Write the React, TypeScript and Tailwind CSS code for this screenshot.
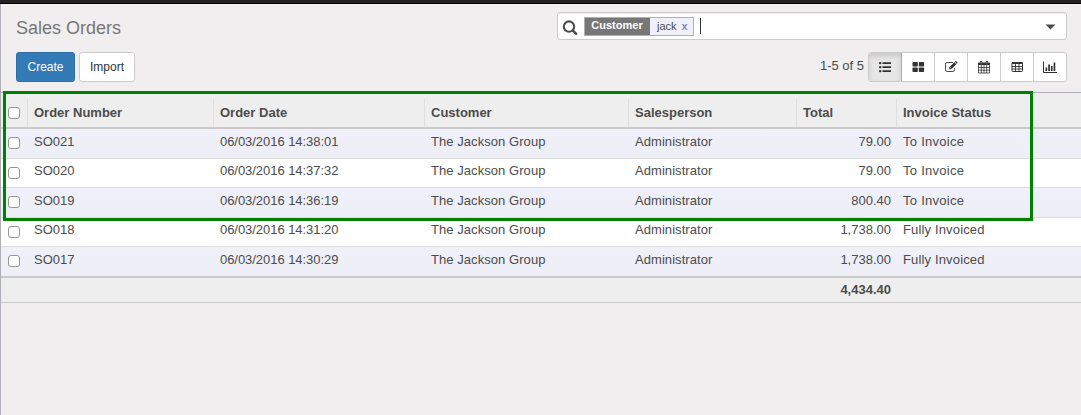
import type { ReactNode } from "react";

const columns = ["Order Number", "Order Date", "Customer", "Salesperson", "Total", "Invoice Status"];

const orders = [
  { id: "SO021", date: "06/03/2016 14:38:01", total: "79.00", status: "To Invoice", size: "h-[30px] leading-[25px]" },
  { id: "SO020", date: "06/03/2016 14:37:32", total: "79.00", status: "To Invoice", size: "h-[29px] leading-[23px]" },
  { id: "SO019", date: "06/03/2016 14:36:19", total: "800.40", status: "To Invoice", size: "h-[30px] leading-[25px]" },
  { id: "SO018", date: "06/03/2016 14:31:20", total: "1,738.00", status: "Fully Invoiced", size: "h-[29px] leading-[23px]" },
  { id: "SO017", date: "06/03/2016 14:30:29", total: "1,738.00", status: "Fully Invoiced", size: "h-[29px] leading-[25px]" },
];

const grid = "grid grid-cols-[26px_186px_211px_204px_168px_100px_1fr]";

function Icon({ children }: { children: ReactNode }) {
  return (
    <svg width="14" height="14" viewBox="0 0 14 14" fill="currentColor">
      {children}
    </svg>
  );
}

const views: { name: string; icon: ReactNode }[] = [
  {
    name: "List",
    icon: (
      <Icon>
        <rect x="1" y="2" width="2.4" height="2.2" rx="1" />
        <rect x="1" y="6" width="2.4" height="2.2" rx="1" />
        <rect x="1" y="10" width="2.4" height="2.2" rx="1" />
        <path d="M4.500 2.300H13v1.600H4.500zM4.500 6.300H13v1.600H4.500zM4.500 10.300H13v1.600H4.500z" />
      </Icon>
    ),
  },
  {
    name: "Kanban",
    icon: (
      <Icon>
        <rect x="1.500" y="2" width="5.3" height="4.500" rx="0.7" />
        <rect x="7.800" y="2" width="5.300" height="4.500" rx="0.7" />
        <rect x="1.500" y="7.500" width="5.300" height="4.500" rx="0.7" />
        <rect x="7.800" y="7.500" width="5.300" height="4.500" rx="0.7" />
      </Icon>
    ),
  },
  {
    name: "Form",
    icon: (
      <Icon>
        <path d="M9 2.500H3.200A1.700 1.700 0 0 0 1.500 4.200V9.800A1.700 1.700 0 0 0 3.200 11.500H8.800A1.700 1.700 0 0 0 10.500 9.800V8.200" fill="none" stroke="currentColor" strokeWidth="0.9" />
        <path d="M5.300 7.200 10.300 2.200 12.300 4.200 7.300 9.200H5.300z" />
        <path d="M10.800 1.700 11.300 1.200a.7.7 0 0 1 1 0l1 1a.7.7 0 0 1 0 1l-.5.5z" />
        <path d="M6 7.100l1.300 1.300" stroke="white" strokeWidth="0.7" />
      </Icon>
    ),
  },
  {
    name: "Calendar",
    icon: (
      <Icon>
        <path d="M1.500 4.500h11v8.500h-11zM1.500 7.500h11M1.500 10.200h11M4.300 4.500v8.500M7 4.500v8.500M9.700 4.500v8.500" fill="none" stroke="currentColor" strokeWidth="0.8" />
        <path d="M1.700 2.500h10.600q.7 0 .7.700V5H1V3.200q0-.7.700-.7z" />
        <rect x="3" y="1" width="2.200" height="3.500" rx="0.800" />
        <rect x="8.800" y="1" width="2.200" height="3.500" rx="0.800" />
        <path d="M4.100 2v1.700M9.900 2v1.700" stroke="white" strokeWidth="0.500" />
      </Icon>
    ),
  },
  {
    name: "Pivot",
    icon: (
      <Icon>
        <rect x="2" y="2.500" width="10.500" height="9" rx="0.700" fill="none" stroke="currentColor" />
        <path d="M2 2h10.500v2H2z" />
        <path d="M2 6.500h10.500M2 9h10.500M5.500 3v8.500M9 3v8.500" stroke="currentColor" strokeWidth="0.9" />
      </Icon>
    ),
  },
  {
    name: "Graph",
    icon: (
      <Icon>
        <path d="M0.500 1.500v11H14" fill="none" stroke="currentColor" />
        <path d="M2.500 7.500h1.700v3.500H2.500zM5.200 4.500h1.700V11H5.200zM7.900 6h1.700v5H7.900zM10.600 2.500h1.700V11h-1.700z" />
      </Icon>
    ),
  },
];

function Checkbox() {
  return (
    <input
      type="checkbox"
      className="block h-3 w-3 shrink-0 appearance-none rounded-[3px] border border-[#969696] bg-white"
    />
  );
}

export default function App() {
  return (
    <div className="relative flex h-[415px] w-[1081px] flex-col overflow-hidden bg-[#f0eeee] font-['Liberation_Sans',Arial,sans-serif] text-[13px] text-[#4c4c4c]">
      <div className="h-1 shrink-0 border-b border-black bg-[#222]" />
      <div className="flex min-h-0 grow flex-col border-l border-[#afafb6]">
        <header className="flex h-[89px] shrink-0 justify-between border-b border-[#afafb6] pr-[14px] pl-[15px]">
          <div>
            <h1 className="mt-3 h-6 text-lg leading-6 text-[#777]">Sales Orders</h1>
            <div className="mt-3 flex gap-1 text-xs">
              <button className="h-[30px] w-[59px] rounded-[3px] border border-[#2e6da4] bg-[#337ab7] text-white">Create</button>
              <button className="h-[30px] w-14 rounded-[3px] border border-[#ccc] bg-white text-[#333]">Import</button>
            </div>
          </div>
          <div className="flex flex-col items-end">
            <div className="mt-2 flex h-7 w-[510px] items-center rounded-[3px] border border-[#ccc] bg-white pr-[10px] pl-1 shadow-[inset_0_1px_1px_rgba(0,0,0,0.075)]">
              <svg className="mt-[3px]" width="16" height="16" viewBox="0 0 16 16" fill="none" stroke="currentColor">
                <circle cx="7" cy="6.600" r="5.200" strokeWidth="2.100" />
                <path d="M11 10.600 14.200 13.800" strokeWidth="2.400" strokeLinecap="round" />
              </svg>
              <div className="ml-[6px] flex h-[19px] border border-[#afafb6] bg-[#f0f0fa] text-[11px] leading-4">
                <span className="w-[65px] bg-[#777] pr-px text-center leading-[15px] font-bold text-white">Customer</span>
                <span className="flex w-[43px] items-center gap-[5px] pl-[7px]">
                  jack <span className="font-bold text-[#8786b7]">x</span>
                </span>
              </div>
              <span className="ml-[6px] h-4 w-px bg-[#333]" />
              <svg className="mt-px ml-auto" width="11" height="6" viewBox="0 0 11 6" fill="currentColor">
                <path d="M.5.500h10L5.500 5.500z" />
              </svg>
            </div>
            <div className="mt-3 flex">
              <span className="mr-1 leading-7">1-5 of 5</span>
              <div className="flex h-[30px] w-[199px] overflow-hidden rounded-[3px] border border-[#ccc] bg-white text-[#333]">
                {views.map((view, i) => (
                  <button
                    key={view.name}
                    aria-label={view.name}
                    className={
                      i === 0
                        ? "flex w-[33px] shrink-0 items-center justify-center border-r border-[#adadad] bg-[#e6e6e6] shadow-[inset_0_3px_5px_rgba(0,0,0,0.125)]"
                        : "flex w-[33px] shrink-0 items-center justify-center border-r border-[#ccc] last:w-8 last:border-r-0"
                    }
                  >
                    {view.icon}
                  </button>
                ))}
              </div>
            </div>
          </div>
        </header>

        <div className={`${grid} h-9 shrink-0 border-b-2 border-[#cacaca] bg-[#eee] pt-[6px] font-bold`}>
          <div className="flex items-center pl-[7px]"><Checkbox /></div>
          {columns.map((column) => (
            <div key={column} className="border-l border-[#dfdfdf] pl-[6px] leading-[27px]">{column}</div>
          ))}
        </div>
        {orders.map((order, i) => (
          <div
            key={order.id}
            className={`${grid} ${order.size} shrink-0 ${i % 2 === 0 ? "bg-linear-to-b from-[#f0f0fa] to-[#eeeef6]" : "bg-white"} ${i < 4 ? "border-b border-[#ddd]" : ""}`}
          >
            <div className="pt-2 pl-[7px]"><Checkbox /></div>
            <div className="pl-[7px]">{order.id}</div>
            <div className="pl-[7px] tracking-[-0.05px]">{order.date}</div>
            <div className="pl-[7px] tracking-[0.06px]">The Jackson Group</div>
            <div className="pl-[7px] tracking-[0.06px]">Administrator</div>
            <div className="pr-[5px] text-right">{order.total}</div>
            <div className={order.status === "To Invoice" ? "pl-[7px] tracking-[0.27px]" : "pl-[7px] tracking-[0.15px]"}>{order.status}</div>
          </div>
        ))}
        <div className={`${grid} h-[27px] shrink-0 border-t-2 border-b border-[#cacaca] bg-[#eee] leading-6 font-bold`}>
          <div className="col-start-6 pr-[5px] text-right">4,434.40</div>
        </div>
      </div>
      <div className="pointer-events-none absolute top-[91px] left-[3px] h-[130px] w-[1030px] border-3 border-[#008000]" />
    </div>
  );
}
